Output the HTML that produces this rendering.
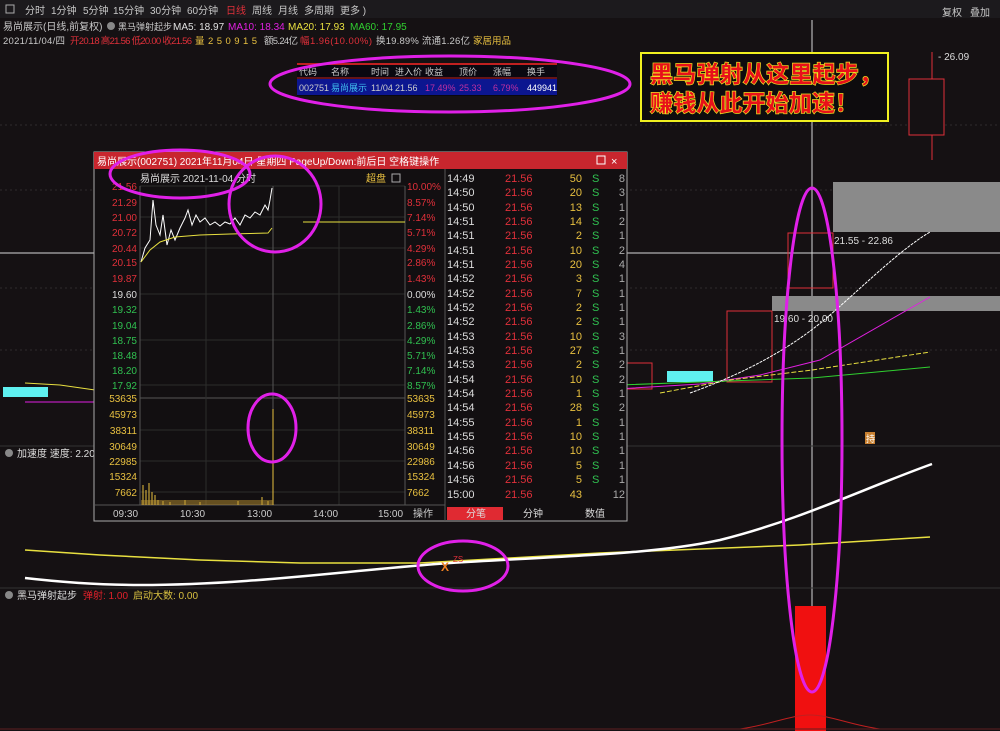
<!DOCTYPE html>
<html><head><meta charset="utf-8"><style>
html,body{margin:0;padding:0;background:#151113;width:1000px;height:731px;overflow:hidden}
svg{display:block}
text{font-family:"Liberation Sans","Noto Sans CJK SC",sans-serif}
</style></head><body>
<svg width="1000" height="731" viewBox="0 0 1000 731" xmlns="http://www.w3.org/2000/svg">
<rect width="1000" height="731" fill="#151113"/>
<!-- top bar -->
<rect x="0" y="0" width="1000" height="18" fill="#1c1a1d"/>
<rect x="6" y="5" width="8" height="8" fill="none" stroke="#aaa"/>
<g font-size="10" fill="#c8c8c8">
<text x="25" y="14">分时</text><text x="51" y="14">1分钟</text><text x="83" y="14">5分钟</text><text x="113" y="14">15分钟</text><text x="150" y="14">30分钟</text><text x="187" y="14">60分钟</text>
<text x="226" y="14" fill="#e0303a">日线</text><text x="252" y="14">周线</text><text x="278" y="14">月线</text><text x="304" y="14">多周期</text><text x="340" y="14">更多 )</text>
<text x="942" y="16">复权</text><text x="970" y="16">叠加</text>
</g>
<g font-size="10">
<text x="3" y="30" fill="#c8c8c8">易尚展示(日线,前复权)</text>
<circle cx="111" cy="26" r="4" fill="#888"/>
<text x="118" y="30" fill="#c8c8c8" font-size="9">黑马弹射起步</text>
<text x="173" y="30" fill="#e0e0e0">MA5: 18.97</text>
<text x="228" y="30" fill="#e020e0">MA10: 18.34</text>
<text x="288" y="30" fill="#e8e040">MA20: 17.93</text>
<text x="350" y="30" fill="#30d030">MA60: 17.95</text>
</g>
<g font-size="9.5">
<text x="3" y="44" fill="#c8c8c8" textLength="62">2021/11/04/四</text>
<text x="70" y="44" fill="#e0303a" textLength="122">开20.18 高21.56 低20.00 收21.56</text>
<text x="195" y="44" fill="#e8c040" textLength="62">量250915</text>
<text x="264" y="44" fill="#c8c8c8" textLength="34">额5.24亿</text>
<text x="300" y="44" fill="#e0303a" textLength="72">幅1.96(10.00%)</text>
<text x="376" y="44" fill="#c8c8c8" textLength="94">换19.89% 流通1.26亿</text>
<text x="473" y="44" fill="#e8c040" textLength="38">家居用品</text>
</g>
<!-- grid dotted -->
<g stroke="#2e2a2e" stroke-dasharray="2,3">
<line x1="0" y1="125" x2="1000" y2="125"/><line x1="0" y1="190" x2="1000" y2="190"/><line x1="0" y1="288" x2="1000" y2="288"/><line x1="0" y1="350" x2="1000" y2="350"/>
</g>
<line x1="0" y1="253" x2="1000" y2="253" stroke="#d8d8d8"/>
<line x1="812" y1="20" x2="812" y2="731" stroke="#d8d8d8"/>
<!-- gray zones -->
<rect x="833" y="182" width="167" height="50" fill="#8a8a8a"/>
<rect x="772" y="296" width="228" height="15" fill="#8a8a8a"/>
<text x="834" y="244" font-size="10" fill="#ddd">21.55 - 22.86</text>
<text x="774" y="322" font-size="10" fill="#ddd">19.60 - 20.00</text>
<!-- candles -->
<rect x="788" y="233" width="45" height="55" fill="none" stroke="#e0303a"/>
<rect x="727" y="311" width="45" height="71" fill="none" stroke="#e0303a"/>
<rect x="627" y="363" width="25" height="26" fill="none" stroke="#e0303a"/>
<line x1="932" y1="52" x2="932" y2="160" stroke="#e0303a"/>
<rect x="909" y="79" width="35" height="56" fill="#151113" stroke="#e0303a"/>
<text x="938" y="60" font-size="10" fill="#ddd">- 26.09</text>
<rect x="667" y="371" width="46" height="11" fill="#5ff0f0"/>
<rect x="3" y="387" width="45" height="10" fill="#5ff0f0"/>
<!-- MAs -->
<polyline points="600,390 700,384 760,375 820,360 930,297" fill="none" stroke="#e020e0"/>
<polyline points="660,393 730,380 812,370 930,352" fill="none" stroke="#e8e040" stroke-dasharray="5,2"/>
<polyline points="620,385 700,382 812,378 930,367" fill="none" stroke="#30d030"/>
<path d="M690,393 C740,375 790,350 830,315 S900,250 930,232" fill="none" stroke="#fff" stroke-dasharray="3,1"/>
<polyline points="25,383 60,385 95,390" fill="none" stroke="#e8e040"/>
<polyline points="25,402 95,402" fill="none" stroke="#e020e0"/>
<rect x="865" y="432" width="10" height="12" fill="#c88030"/><text x="866" y="442" font-size="9" fill="#fff">持</text>
<!-- indicator 1 -->
<line x1="0" y1="446" x2="1000" y2="446" stroke="#333"/>
<circle cx="9" cy="453" r="4" fill="#888"/>
<text x="17" y="457" font-size="10" fill="#ddd">加速度 速度: 2.20</text>
<polyline points="25,550 100,555 200,560 300,563 420,563 600,553 800,545 930,537" fill="none" stroke="#e8e040" stroke-width="1.5"/>
<path d="M25,578 C60,582 100,585 140,585 C250,585 350,570 450,563 C560,556 650,555 720,540 C800,520 860,490 932,464" fill="none" stroke="#fff" stroke-width="2.5"/>
<text x="441" y="571" font-size="12" fill="#f08020" font-weight="bold">X</text>
<text x="453" y="562" font-size="8" fill="#e0303a">ZS</text>
<!-- indicator 2 -->
<line x1="0" y1="588" x2="1000" y2="588" stroke="#333"/>
<circle cx="9" cy="595" r="4" fill="#888"/>
<text x="17" y="599" font-size="10" fill="#ddd">黑马弹射起步</text>
<text x="83" y="599" font-size="10" fill="#e0202a">弹射: 1.00</text>
<text x="133" y="599" font-size="10" fill="#d8c040">启动大数: 0.00</text>
<rect x="795" y="606" width="31" height="125" fill="#f01010"/>
<path d="M740,729 C770,725 790,715 810,715 C830,715 850,725 880,729" fill="none" stroke="#c02020"/>
<line x1="0" y1="729" x2="1000" y2="729" stroke="#602020"/>
<!-- info table -->
<rect x="297" y="63" width="260" height="33" fill="#0a0810"/>
<line x1="297" y1="64" x2="557" y2="64" stroke="#c02020" stroke-width="2"/>
<line x1="297" y1="78" x2="557" y2="78" stroke="#c02020"/>
<rect x="297" y="79" width="260" height="16" fill="#0c1690"/>
<g font-size="9" fill="#ccc">
<text x="299" y="75">代码</text><text x="331" y="75">名称</text><text x="371" y="75">时间</text><text x="395" y="75">进入价</text><text x="425" y="75">收益</text><text x="459" y="75">顶价</text><text x="493" y="75">涨幅</text><text x="527" y="75">换手</text>
<text x="299" y="91">002751</text><text x="331" y="91" fill="#40c0f0">易尚展示</text><text x="371" y="91">11/04</text><text x="395" y="91">21.56</text>
<text x="425" y="91" fill="#c030a0">17.49%</text><text x="459" y="91" fill="#c030a0">25.33</text><text x="493" y="91" fill="#c030a0">6.79%</text><text x="527" y="91" fill="#fff">449941</text>
</g>
<!-- slogan -->
<rect x="641" y="53" width="247" height="68" fill="#0e0c0e" stroke="#f0f020" stroke-width="2"/>
<g font-size="23" font-weight="bold" fill="#e8101a" stroke="#f0e020" stroke-width="1.4" paint-order="stroke">
<text x="650" y="82" textLength="232" font-family="'Noto Serif CJK SC','Noto Sans CJK SC',serif">黑马弹射从这里起步，</text>
<text x="650" y="111" textLength="208" font-family="'Noto Serif CJK SC','Noto Sans CJK SC',serif">赚钱从此开始加速！</text>
</g>
<!-- popup -->
<rect x="94" y="152" width="533" height="369" fill="#120f11" stroke="#aaa"/>
<rect x="94" y="152" width="533" height="17" fill="#c8262e"/>
<text x="97" y="165" font-size="10" fill="#fff">易尚展示(002751) 2021年11月04日 星期四 PageUp/Down:前后日 空格键操作</text>
<rect x="597" y="156" width="8" height="8" fill="none" stroke="#fff"/>
<text x="611" y="165" font-size="11" fill="#fff">×</text>
<text x="140" y="182" font-size="10" fill="#ddd">易尚展示  2021-11-04 分时</text>
<text x="366" y="182" font-size="10" fill="#e8c040">超盘</text>
<rect x="392" y="174" width="8" height="8" fill="none" stroke="#aaa"/>
<g stroke="#2c2c2c">
<line x1="140" y1="186" x2="405" y2="186"/><line x1="140" y1="217" x2="405" y2="217"/><line x1="140" y1="248" x2="405" y2="248"/><line x1="140" y1="294" x2="405" y2="294"/><line x1="140" y1="340" x2="405" y2="340"/><line x1="140" y1="385" x2="405" y2="385"/>
<line x1="140" y1="398" x2="405" y2="398" stroke="#555"/><line x1="140" y1="430" x2="405" y2="430"/><line x1="140" y1="461" x2="405" y2="461"/><line x1="140" y1="492" x2="405" y2="492"/>
<line x1="206" y1="186" x2="206" y2="505"/><line x1="273" y1="186" x2="273" y2="505" stroke="#555"/><line x1="339" y1="186" x2="339" y2="505"/>
</g>
<line x1="140" y1="186" x2="140" y2="505" stroke="#555"/>
<line x1="405" y1="186" x2="405" y2="505" stroke="#555"/>
<line x1="95" y1="505" x2="445" y2="505" stroke="#555"/>
<line x1="445" y1="169" x2="445" y2="521" stroke="#555"/>
<g font-size="10" text-anchor="end">
<text x="137" y="190" fill="#e0303a">21.56</text><text x="137" y="206" fill="#e0303a">21.29</text><text x="137" y="221" fill="#e0303a">21.00</text><text x="137" y="236" fill="#e0303a">20.72</text><text x="137" y="252" fill="#e0303a">20.44</text><text x="137" y="266" fill="#e0303a">20.15</text><text x="137" y="282" fill="#e0303a">19.87</text>
<text x="137" y="298" fill="#ddd">19.60</text>
<text x="137" y="313" fill="#30c050">19.32</text><text x="137" y="329" fill="#30c050">19.04</text><text x="137" y="344" fill="#30c050">18.75</text><text x="137" y="359" fill="#30c050">18.48</text><text x="137" y="374" fill="#30c050">18.20</text><text x="137" y="389" fill="#30c050">17.92</text>
<text x="137" y="402" fill="#e8c040">53635</text><text x="137" y="418" fill="#e8c040">45973</text><text x="137" y="434" fill="#e8c040">38311</text><text x="137" y="450" fill="#e8c040">30649</text><text x="137" y="465" fill="#e8c040">22985</text><text x="137" y="480" fill="#e8c040">15324</text><text x="137" y="496" fill="#e8c040">7662</text>
</g>
<g font-size="10">
<text x="407" y="190" fill="#e0303a">10.00%</text><text x="407" y="206" fill="#e0303a">8.57%</text><text x="407" y="221" fill="#e0303a">7.14%</text><text x="407" y="236" fill="#e0303a">5.71%</text><text x="407" y="252" fill="#e0303a">4.29%</text><text x="407" y="266" fill="#e0303a">2.86%</text><text x="407" y="282" fill="#e0303a">1.43%</text>
<text x="407" y="298" fill="#ddd">0.00%</text>
<text x="407" y="313" fill="#30c050">1.43%</text><text x="407" y="329" fill="#30c050">2.86%</text><text x="407" y="344" fill="#30c050">4.29%</text><text x="407" y="359" fill="#30c050">5.71%</text><text x="407" y="374" fill="#30c050">7.14%</text><text x="407" y="389" fill="#30c050">8.57%</text>
<text x="407" y="402" fill="#e8c040">53635</text><text x="407" y="418" fill="#e8c040">45973</text><text x="407" y="434" fill="#e8c040">38311</text><text x="407" y="450" fill="#e8c040">30649</text><text x="407" y="465" fill="#e8c040">22986</text><text x="407" y="480" fill="#e8c040">15324</text><text x="407" y="496" fill="#e8c040">7662</text>
<text x="113" y="517" fill="#ccc">09:30</text><text x="180" y="517" fill="#ccc">10:30</text><text x="247" y="517" fill="#ccc">13:00</text><text x="313" y="517" fill="#ccc">14:00</text><text x="378" y="517" fill="#ccc">15:00</text><text x="413" y="517" fill="#ccc">操作</text>
</g>
<!-- intraday lines -->
<polyline points="141,262 145,248 150,240 153,200 156,225 160,235 163,215 167,245 171,230 175,240 180,228 185,218 188,210 192,225 196,215 200,222 205,218 210,225 215,222 220,226 225,222 230,224 235,218 240,225 245,215 250,218 255,212 260,215 265,205 268,210 270,200 272,188" fill="none" stroke="#fff"/>
<polyline points="141,262 150,250 160,242 175,237 200,235 230,234 268,233 272,228" fill="none" stroke="#e8e040"/>
<line x1="303" y1="222" x2="405" y2="222" stroke="#e8e040"/>
<!-- volume bars -->
<g stroke="#e8c040">
<line x1="143" y1="505" x2="143" y2="485"/><line x1="146" y1="505" x2="146" y2="490"/><line x1="149" y1="505" x2="149" y2="483"/><line x1="152" y1="505" x2="152" y2="492"/><line x1="155" y1="505" x2="155" y2="495"/>
<line x1="158" y1="505" x2="158" y2="500"/><line x1="163" y1="505" x2="163" y2="501"/><line x1="170" y1="505" x2="170" y2="502"/><line x1="185" y1="505" x2="185" y2="500"/><line x1="200" y1="505" x2="200" y2="502"/><line x1="238" y1="505" x2="238" y2="501"/><line x1="262" y1="505" x2="262" y2="497"/><line x1="268" y1="505" x2="268" y2="501"/>
<line x1="273" y1="505" x2="273" y2="409"/>
</g>
<rect x="141" y="500" width="132" height="5" fill="#b89030" opacity="0.5"/>
<!-- trade table -->
<g font-size="11">
<g fill="#ddd">
<text x="447" y="182">14:49</text><text x="447" y="196">14:50</text><text x="447" y="211">14:50</text><text x="447" y="225">14:51</text><text x="447" y="239">14:51</text><text x="447" y="254">14:51</text><text x="447" y="268">14:51</text><text x="447" y="282">14:52</text><text x="447" y="297">14:52</text><text x="447" y="311">14:52</text><text x="447" y="325">14:52</text><text x="447" y="340">14:53</text><text x="447" y="354">14:53</text><text x="447" y="368">14:53</text><text x="447" y="383">14:54</text><text x="447" y="397">14:54</text><text x="447" y="411">14:54</text><text x="447" y="426">14:55</text><text x="447" y="440">14:55</text><text x="447" y="454">14:56</text><text x="447" y="469">14:56</text><text x="447" y="483">14:56</text><text x="447" y="498">15:00</text>
</g>
<g fill="#e0303a">
<text x="505" y="182">21.56</text><text x="505" y="196">21.56</text><text x="505" y="211">21.56</text><text x="505" y="225">21.56</text><text x="505" y="239">21.56</text><text x="505" y="254">21.56</text><text x="505" y="268">21.56</text><text x="505" y="282">21.56</text><text x="505" y="297">21.56</text><text x="505" y="311">21.56</text><text x="505" y="325">21.56</text><text x="505" y="340">21.56</text><text x="505" y="354">21.56</text><text x="505" y="368">21.56</text><text x="505" y="383">21.56</text><text x="505" y="397">21.56</text><text x="505" y="411">21.56</text><text x="505" y="426">21.56</text><text x="505" y="440">21.56</text><text x="505" y="454">21.56</text><text x="505" y="469">21.56</text><text x="505" y="483">21.56</text><text x="505" y="498">21.56</text>
</g>
<g fill="#e8c040" text-anchor="end">
<text x="582" y="182">50</text><text x="582" y="196">20</text><text x="582" y="211">13</text><text x="582" y="225">14</text><text x="582" y="239">2</text><text x="582" y="254">10</text><text x="582" y="268">20</text><text x="582" y="282">3</text><text x="582" y="297">7</text><text x="582" y="311">2</text><text x="582" y="325">2</text><text x="582" y="340">10</text><text x="582" y="354">27</text><text x="582" y="368">2</text><text x="582" y="383">10</text><text x="582" y="397">1</text><text x="582" y="411">28</text><text x="582" y="426">1</text><text x="582" y="440">10</text><text x="582" y="454">10</text><text x="582" y="469">5</text><text x="582" y="483">5</text><text x="582" y="498">43</text>
</g>
<g fill="#30c050">
<text x="592" y="182">S</text><text x="592" y="196">S</text><text x="592" y="211">S</text><text x="592" y="225">S</text><text x="592" y="239">S</text><text x="592" y="254">S</text><text x="592" y="268">S</text><text x="592" y="282">S</text><text x="592" y="297">S</text><text x="592" y="311">S</text><text x="592" y="325">S</text><text x="592" y="340">S</text><text x="592" y="354">S</text><text x="592" y="368">S</text><text x="592" y="383">S</text><text x="592" y="397">S</text><text x="592" y="411">S</text><text x="592" y="426">S</text><text x="592" y="440">S</text><text x="592" y="454">S</text><text x="592" y="469">S</text><text x="592" y="483">S</text>
</g>
<g fill="#aaa" text-anchor="end">
<text x="625" y="182">8</text><text x="625" y="196">3</text><text x="625" y="211">1</text><text x="625" y="225">2</text><text x="625" y="239">1</text><text x="625" y="254">2</text><text x="625" y="268">4</text><text x="625" y="282">1</text><text x="625" y="297">1</text><text x="625" y="311">1</text><text x="625" y="325">1</text><text x="625" y="340">3</text><text x="625" y="354">1</text><text x="625" y="368">2</text><text x="625" y="383">2</text><text x="625" y="397">1</text><text x="625" y="411">2</text><text x="625" y="426">1</text><text x="625" y="440">1</text><text x="625" y="454">1</text><text x="625" y="469">1</text><text x="625" y="483">1</text><text x="625" y="498">12</text>
</g>
</g>
<rect x="447" y="507" width="56" height="13" fill="#e02a32"/>
<g font-size="10" fill="#ddd"><text x="466" y="517">分笔</text><text x="523" y="517">分钟</text><text x="585" y="517">数值</text></g>
<!-- magenta ellipses -->
<g fill="none" stroke="#e020e8" stroke-width="3">
<ellipse cx="450" cy="84" rx="180" ry="28"/>
<ellipse cx="180" cy="174" rx="70" ry="24"/>
<ellipse cx="275" cy="204" rx="46" ry="48"/>
<ellipse cx="272" cy="428" rx="24" ry="34"/>
<ellipse cx="463" cy="566" rx="45" ry="25"/>
<ellipse cx="812" cy="440" rx="30" ry="252"/>
</g>
</svg>
</body></html>
